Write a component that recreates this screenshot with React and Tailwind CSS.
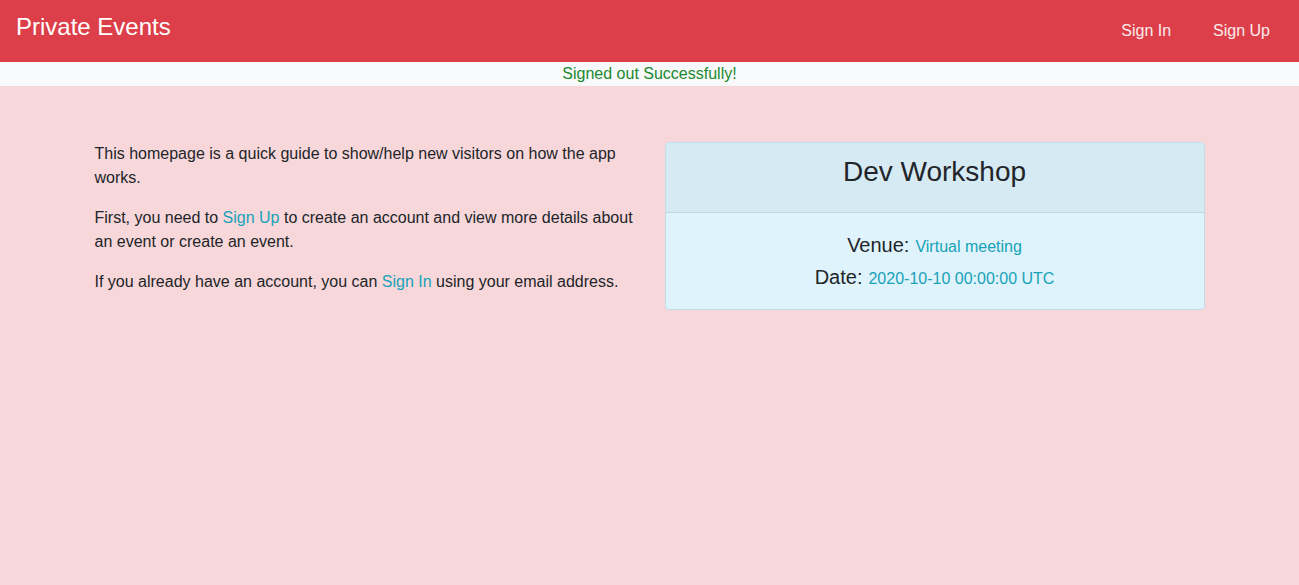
export default function App() {
  const font = { fontFamily: '"Liberation Sans", Arial, sans-serif' };
  return (
    <div className="min-h-[585px] bg-[#f8d7da] text-[#212529]" style={font}>
      <nav className="h-[62px] bg-[#dc3f49] flex items-start justify-between">
        <a className="ml-4 mt-[12px] text-[24px] leading-[29px] text-white">Private Events</a>
        <div className="flex mt-[19px] mr-[13px]">
          <a className="px-[16px] text-[16px] leading-[24px] text-white/90">Sign In</a>
          <a className="ml-[10px] px-[16px] text-[16px] leading-[24px] text-white/90">Sign Up</a>
        </div>
      </nav>
      <div className="h-[24px] bg-[#f8f9fa] text-center text-[16px] leading-[24px] text-[#1a8a2e]">
        Signed out Successfully!
      </div>
      <div className="mx-auto w-[1140px] px-[15px] pt-[56px]">
        <div className="flex gap-[30px]">
          <div className="w-[540px] text-[16px] leading-[24px]">
            <p className="mb-4">This homepage is a quick guide to show/help new visitors on how the app works.</p>
            <p className="mb-4">
              First, you need to <a className="text-[#17a2b8]">Sign Up</a> to create an account and view more details about an event or create an event.
            </p>
            <p className="mb-4">
              If you already have an account, you can <a className="text-[#17a2b8]">Sign In</a> using your email address.
            </p>
          </div>
          <div className="w-[540px]">
            <div className="rounded-[4px] border border-[#c0dfe8] bg-[#dff3fc] overflow-hidden">
              <div className="h-[70px] border-b border-[#bfd9e3] bg-[#d6eaf3] pt-[12px] text-center">
                <h3 className="text-[28px] leading-[34px]">Dev Workshop</h3>
              </div>
              <div className="px-5 pt-[20px] pb-[20px] flex flex-col gap-2">
                <div className="h-[24px] flex items-baseline justify-center text-[20px] leading-[24px]">
                  <span>Venue:</span>
                  <span className="ml-[6px] text-[16px] leading-[24px] text-[#17a2b8]">Virtual meeting</span>
                </div>
                <div className="h-[24px] flex items-baseline justify-center text-[20px] leading-[24px]">
                  <span>Date:</span>
                  <span className="ml-[6px] text-[16px] leading-[24px] text-[#17a2b8]">2020-10-10 00:00:00 UTC</span>
                </div>
              </div>
            </div>
          </div>
        </div>
      </div>
    </div>
  );
}
